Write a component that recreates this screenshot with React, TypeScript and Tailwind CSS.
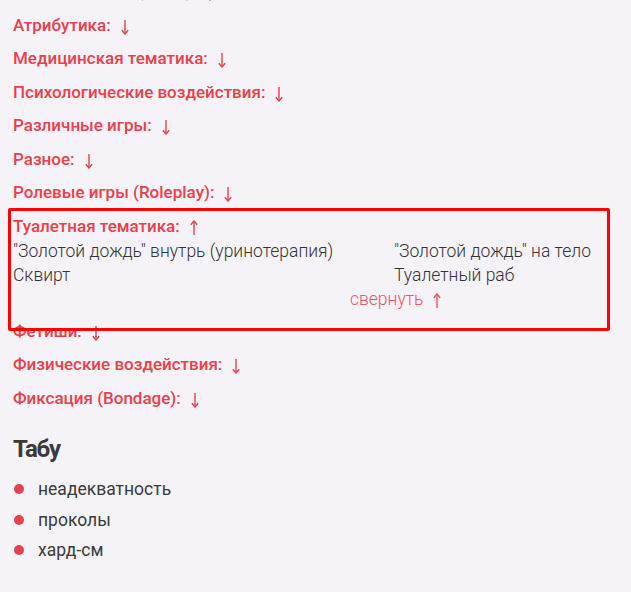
import React from "react";

const before = [
  "Игры с ролями (Roles):",
  "Атрибутика:",
  "Медицинская тематика:",
  "Психологические воздействия:",
  "Различные игры:",
  "Разное:",
  "Ролевые игры (Roleplay):",
];

const after = ["Фетиши:", "Физические воздействия:", "Фиксация (Bondage):"];

const taboo = ["неадекватность", "проколы", "хард-см"];

function Arrow({ up = false }: { up?: boolean }) {
  return (
    <svg
      width="10"
      height="16"
      viewBox="0 0 10 16"
      className={`inline-block ml-[9px] align-[-4px] ${up ? "rotate-180" : ""}`}
      fill="none"
      stroke="currentColor"
      strokeWidth="1.4"
    >
      <path d="M5 1V15" />
      <path d="M1.8 11.2L5 15L8.2 11.2" />
    </svg>
  );
}

function Category({ title, open = false }: { title: string; open?: boolean }) {
  return (
    <div className="h-[33.5px] leading-[33.5px] text-[17px] font-medium text-[#ea3f4c] whitespace-nowrap">
      {title}
      <Arrow up={open} />
    </div>
  );
}

export default function App() {
  return (
    <div
      className="relative min-h-[592px] bg-[#f5f2f8] px-[13px] overflow-hidden"
      style={{ fontFamily: "Roboto, 'Noto Sans', sans-serif" }}
    >
      <div className="-mt-[25px]">
        {before.map((t) => (
          <Category key={t} title={t} />
        ))}

        <div className="h-[32px] leading-[32px] text-[17px] font-medium text-[#ea3f4c]">
          Туалетная тематика:
          <Arrow up />
        </div>
        <div className="-mt-[3px] grid grid-cols-[381px_1fr] text-[17.5px] leading-[24px] font-light text-[#333]">
          <div>"Золотой дождь" внутрь (уринотерапия)</div>
          <div>"Золотой дождь" на тело</div>
          <div>Сквирт</div>
          <div>Туалетный раб</div>
        </div>
        <div className="pl-[337px] mb-[4px] h-[24px] leading-[24px] text-[17.5px] font-light text-[#f0545e]">
          свернуть
          <Arrow up />
        </div>

        {after.map((t) => (
          <Category key={t} title={t} />
        ))}

        <h2 className="mt-[19px] leading-[30px] text-[24px] font-bold text-[#3a3a3a] tracking-[-1.2px]">
          Табу
        </h2>
        <ul className="mt-[10px]">
          {taboo.map((t) => (
            <li key={t} className="flex items-center h-[30.5px] text-[17.5px] text-[#3a3a3a]">
              <span className="ml-[1px] w-[10px] h-[10px] rounded-full bg-[#ea3f4c]" />
              <span className="ml-[14px]">{t}</span>
            </li>
          ))}
        </ul>
      </div>

      <div className="absolute left-[8px] top-[208px] w-[602px] h-[123px] border-[3px] border-[#ff0000] rounded-[2px] pointer-events-none" />
    </div>
  );
}
